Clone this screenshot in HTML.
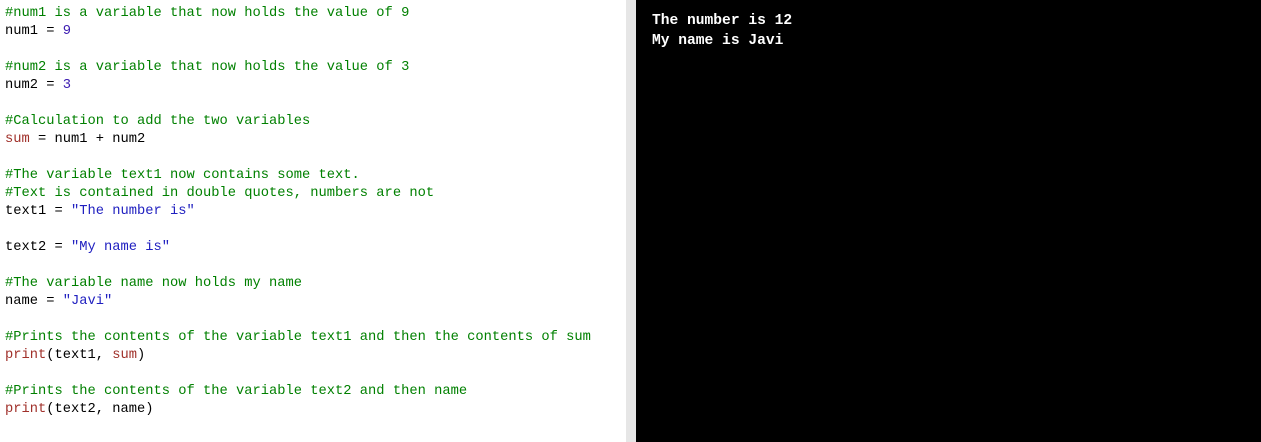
<!DOCTYPE html>
<html><head><style>
html,body{margin:0;padding:0;width:1261px;height:442px;overflow:hidden;background:#fff}
#l{position:absolute;left:0;top:0;width:626px;height:442px;background:#fff}
#bar{position:absolute;left:626px;top:0;width:10px;height:442px;background:#e6e6e6}
#r{position:absolute;left:636px;top:0;width:625px;height:442px;background:#000}
pre{margin:0;font-family:"Liberation Mono",monospace}
#l pre{position:absolute;left:5px;top:5px;line-height:18px;color:#000;font-size:13.75px}
#r pre{position:absolute;left:16px;top:11px;line-height:20px;color:#fff;font-weight:bold;font-size:14.6px}
.c{color:#008000}.s{color:#2020c0}.n{color:#3a1ab0}.k{color:#a0302a}
</style></head><body>
<div id="l"><pre><span class="c">#num1 is a variable that now holds the value of 9</span>
num1 = <span class="n">9</span>

<span class="c">#num2 is a variable that now holds the value of 3</span>
num2 = <span class="n">3</span>

<span class="c">#Calculation to add the two variables</span>
<span class="k">sum</span> = num1 + num2

<span class="c">#The variable text1 now contains some text.</span>
<span class="c">#Text is contained in double quotes, numbers are not</span>
text1 = <span class="s">"The number is"</span>

text2 = <span class="s">"My name is"</span>

<span class="c">#The variable name now holds my name</span>
name = <span class="s">"Javi"</span>

<span class="c">#Prints the contents of the variable text1 and then the contents of sum</span>
<span class="k">print</span>(text1, <span class="k">sum</span>)

<span class="c">#Prints the contents of the variable text2 and then name</span>
<span class="k">print</span>(text2, name)</pre></div>
<div id="bar"></div>
<div id="r"><pre>The number is 12
My name is Javi</pre></div>
</body></html>
